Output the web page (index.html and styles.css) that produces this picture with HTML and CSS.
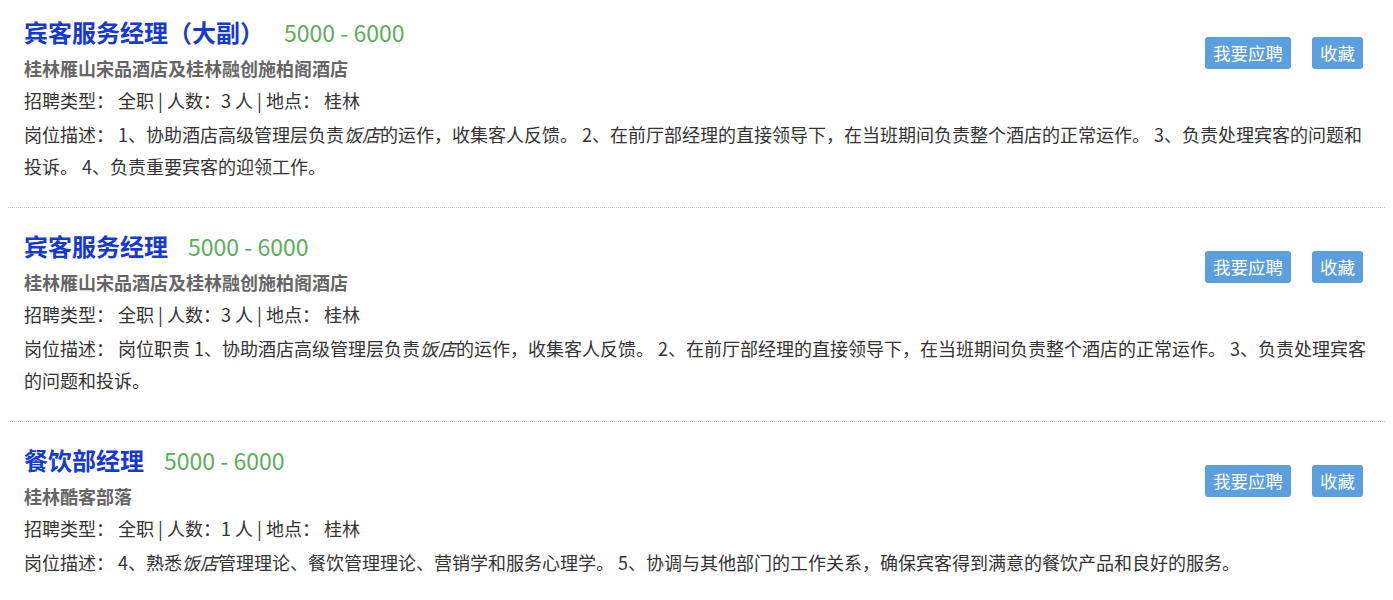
FILE: index.html
```html
<!DOCTYPE html>
<html lang="zh-CN">
<head>
  <meta charset="UTF-8">
  <title>招聘信息</title>
  <link rel="stylesheet" href="styles.css">
</head>
<body>

<div class="job-list">
  <!-- 职位 1 -->
  <div class="job">
    <div class="actions">
      <button class="btn">我要应聘</button>
      <button class="btn">收藏</button>
    </div>
    <div class="job-title">
      <span class="name">宾客服务经理（大副）</span>
      <span class="salary">5000 - 6000</span>
    </div>
    <div class="company">桂林雁山宋品酒店及桂林融创施柏阁酒店</div>
    <div class="info">招聘类型： 全职 | 人数：3 人 | 地点： 桂林</div>
    <div class="desc">岗位描述： 1、协助酒店高级管理层负责<em>饭店</em>的运作，收集客人反馈。 2、在前厅部经理的直接领导下，在当班期间负责整个酒店的正常运作。 3、负责处理宾客的问题和投诉。 4、负责重要宾客的迎领工作。</div>
  </div>

  <!-- 职位 2 -->
  <div class="job">
    <div class="actions">
      <button class="btn">我要应聘</button>
      <button class="btn">收藏</button>
    </div>
    <div class="job-title">
      <span class="name">宾客服务经理</span>
      <span class="salary">5000 - 6000</span>
    </div>
    <div class="company">桂林雁山宋品酒店及桂林融创施柏阁酒店</div>
    <div class="info">招聘类型： 全职 | 人数：3 人 | 地点： 桂林</div>
    <div class="desc">岗位描述： 岗位职责 1、协助酒店高级管理层负责<em>饭店</em>的运作，收集客人反馈。 2、在前厅部经理的直接领导下，在当班期间负责整个酒店的正常运作。 3、负责处理宾客的问题和投诉。</div>
  </div>

  <!-- 职位 3 -->
  <div class="job">
    <div class="actions">
      <button class="btn">我要应聘</button>
      <button class="btn">收藏</button>
    </div>
    <div class="job-title">
      <span class="name">餐饮部经理</span>
      <span class="salary">5000 - 6000</span>
    </div>
    <div class="company">桂林酷客部落</div>
    <div class="info">招聘类型： 全职 | 人数：1 人 | 地点： 桂林</div>
    <div class="desc">岗位描述： 4、熟悉<em>饭店</em>管理理论、餐饮管理理论、营销学和服务心理学。 5、协调与其他部门的工作关系，确保宾客得到满意的餐饮产品和良好的服务。</div>
  </div>
</div>

</body>
</html>
```

FILE: styles.css
```css
* {
  box-sizing: border-box;
}

body {
  margin: 8px;
  font-family: "Noto Sans CJK SC", "Noto Sans", sans-serif;
  font-size: 18px;
  color: #333;
  background: #fff;
}

.job {
  padding: 23px 16px 25px;
  border-bottom: 1px dotted #ccc;
}

.job:first-child {
  padding-top: 9px;
}

.job:last-child {
  border-bottom: none;
}

.actions {
  float: right;
  display: flex;
  gap: 21px;
  margin: 20px 6px 0 20px;
}

.btn {
  height: 32px;
  padding: 0 8px;
  font-family: inherit;
  font-size: 17.5px;
  line-height: 32px;
  color: #fff;
  background-color: #5b9fdf;
  border: none;
  border-radius: 3px;
  cursor: pointer;
}

.job-title {
  height: 35px;
  line-height: 35px;
}

.name {
  font-size: 24px;
  line-height: 24px;
  font-weight: bold;
  color: #1638d4;
}

.salary {
  margin-left: 16px;
  font-size: 23px;
  line-height: 24px;
  color: #5cad5c;
}

.company {
  line-height: 32px;
  font-weight: bold;
  color: #666;
}

.info {
  line-height: 32px;
}

.desc {
  margin-top: 2px;
  line-height: 32px;
}
```
